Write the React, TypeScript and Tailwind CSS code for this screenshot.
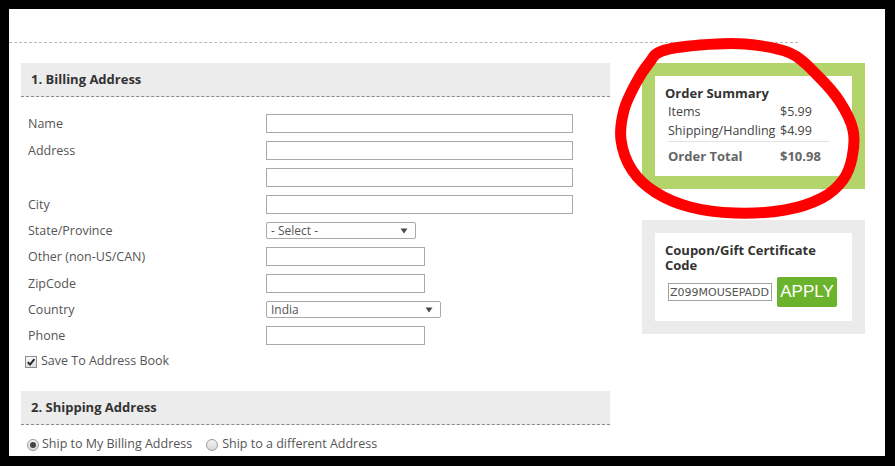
import React from "react";

const pts: [number, number][] = [
  [662, 51], [700, 45], [745, 44], [790, 53], [818, 76], [840, 102], [853, 130],
  [852, 158], [843, 180], [822, 198], [785, 210], [735, 213], [690, 207], [655, 192],
  [632, 170], [621, 140], [624, 110], [636, 83], [649, 63],
];

function closedSpline(p: [number, number][]) {
  const n = p.length;
  let d = `M${p[0][0]},${p[0][1]}`;
  for (let i = 0; i < n; i++) {
    const p0 = p[(i - 1 + n) % n];
    const p1 = p[i];
    const p2 = p[(i + 1) % n];
    const p3 = p[(i + 2) % n];
    const c1x = p1[0] + (p2[0] - p0[0]) / 6;
    const c1y = p1[1] + (p2[1] - p0[1]) / 6;
    const c2x = p2[0] - (p3[0] - p1[0]) / 6;
    const c2y = p2[1] - (p3[1] - p1[1]) / 6;
    d += ` C${c1x.toFixed(1)},${c1y.toFixed(1)} ${c2x.toFixed(1)},${c2y.toFixed(1)} ${p2[0]},${p2[1]}`;
  }
  return d + " Z";
}

const redPath = closedSpline(pts);

function TextInput({ w }: { w: string }) {
  return <div className={`${w} h-[19px] border border-[#a9a9a9] bg-white`} />;
}

function Arrow() {
  return (
    <svg width="8" height="6" viewBox="0 0 8 6" className="absolute right-[7px] top-[5px]">
      <path d="M0.5 0.5 L7.5 0.5 L4 5.5 Z" fill="#4a4a4a" />
    </svg>
  );
}

function SelectBox({ w, text }: { w: string; text: string }) {
  return (
    <div className={`relative ${w} h-[17px] border border-[#a9a9a9] rounded-[2px] bg-white flex items-center pl-[4px] pt-[1px] text-[12px] leading-none text-[#555]`}>
      {text}
      <Arrow />
    </div>
  );
}

function Row({ label, children }: { label: string; children: React.ReactNode }) {
  return (
    <div className="flex items-center mb-[8px]">
      <div className="w-[245px] pl-[7px] pt-[2px] text-[12.5px] leading-none text-[#555]">{label}</div>
      {children}
    </div>
  );
}

function Radio({ on }: { on: boolean }) {
  return (
    <div className="w-[12px] h-[12px] rounded-full border border-[#9a9a9a] bg-gradient-to-b from-[#f4f4f4] to-[#d8d8d8] flex items-center justify-center">
      {on && <div className="w-[6px] h-[6px] rounded-full bg-[#444]" />}
    </div>
  );
}

export default function App() {
  return (
    <div className="relative w-[895px] h-[466px] bg-black pt-[9px] pl-[9px] overflow-hidden font-['Open_Sans',sans-serif]">
      <div className="w-[876px] h-[447px] bg-white overflow-hidden">
        <div className="h-[33px]" />
        <div className="w-[789px] border-t border-dashed border-[#b8b8b8]" />
        <div className="flex pl-[12px] pt-[20px] gap-[32px]">
          {/* Left column */}
          <div className="w-[589px]">
            <div className="h-[34px] bg-[#ececec] border-b border-dashed border-[#8a8a8a] flex items-center pl-[10px] text-[13px] font-bold text-[#333]">
              1. Billing Address
            </div>
            <div className="pt-[17px]">
              <Row label="Name"><TextInput w="w-[307px]" /></Row>
              <Row label="Address"><TextInput w="w-[307px]" /></Row>
              <Row label=""><TextInput w="w-[307px]" /></Row>
              <Row label="City"><TextInput w="w-[307px]" /></Row>
              <Row label="State/Province"><SelectBox w="w-[150px]" text="- Select -" /></Row>
              <Row label="Other (non-US/CAN)"><TextInput w="w-[159px]" /></Row>
              <Row label="ZipCode"><TextInput w="w-[159px]" /></Row>
              <Row label="Country"><SelectBox w="w-[175px]" text="India" /></Row>
              <Row label="Phone"><TextInput w="w-[159px]" /></Row>
              <div className="h-[17px] flex items-center pl-[4px] gap-[4px] text-[12.5px] text-[#555]">
                <div className="w-[12px] h-[12px] border border-[#8e8e8e] bg-gradient-to-b from-[#fafafa] to-[#dcdcdc] flex items-center justify-center">
                  <svg width="10" height="10" viewBox="0 0 10 10">
                    <path d="M1.8 5.2 L4 7.6 L8.4 2.2" fill="none" stroke="#222" strokeWidth="1.9" />
                  </svg>
                </div>
                Save To Address Book
              </div>
            </div>
            <div className="mt-[21px] h-[34px] bg-[#ececec] border-b border-dashed border-[#8a8a8a] flex items-center pl-[10px] text-[13px] font-bold text-[#333]">
              2. Shipping Address
            </div>
            <div className="h-[39px] flex items-center pl-[6px] text-[12.5px] text-[#555]">
              <Radio on={true} />
              <span className="ml-[3px]">Ship to My Billing Address</span>
              <span className="ml-[14px]"><Radio on={false} /></span>
              <span className="ml-[4px]">Ship to a different Address</span>
            </div>
          </div>

          {/* Right column */}
          <div className="w-[223px]">
            <div className="bg-[#b3d36b] p-[13px]">
              <div className="h-[100px] bg-white pl-[10px] pt-[9px]">
                <div className="h-[18px] flex items-center text-[13px] font-bold text-[#333]">Order Summary</div>
                <div className="pl-[3px] w-[164px] text-[12.5px] text-[#444]">
                  <div className="h-[19px] flex items-center">
                    <span className="w-[112px]">Items</span>
                    <span>$5.99</span>
                  </div>
                  <div className="h-[19px] flex items-center">
                    <span className="w-[112px]">Shipping/Handling</span>
                    <span>$4.99</span>
                  </div>
                  <div className="h-[30px] flex items-center border-t border-[#e2e2e2] text-[13px] font-bold text-[#666]">
                    <span className="w-[112px]">Order Total</span>
                    <span>$10.98</span>
                  </div>
                </div>
              </div>
            </div>

            <div className="mt-[31px] bg-[#ebebeb] p-[13px]">
              <div className="h-[88px] bg-white pl-[10px] pt-[10px]">
                <div className="text-[13px] leading-[15px] font-bold text-[#333]">
                  <div className="h-[15px]">Coupon/Gift Certificate</div>
                  <div className="h-[15px]">Code</div>
                </div>
                <div className="mt-[4px] pl-[3px] flex items-center gap-[5px]">
                  <div className="w-[104px] h-[18px] border border-[#a0a0a0] overflow-hidden whitespace-nowrap pl-[1px] flex items-center text-[11px] leading-none text-[#555] font-['DejaVu_Sans',sans-serif]">
                    Z099MOUSEPADD
                  </div>
                  <div className="w-[60px] h-[30px] rounded-[2px] bg-[#6cb32d] flex items-center justify-center text-white text-[17px] font-['Liberation_Sans',Arial,sans-serif]">
                    APPLY
                  </div>
                </div>
              </div>
            </div>
          </div>
        </div>
      </div>

      <svg className="absolute left-0 top-0 pointer-events-none" width="895" height="466" viewBox="0 0 895 466">
        <path d={redPath} fill="none" stroke="#ff0000" strokeWidth="11" strokeLinejoin="round" />
      </svg>
    </div>
  );
}
